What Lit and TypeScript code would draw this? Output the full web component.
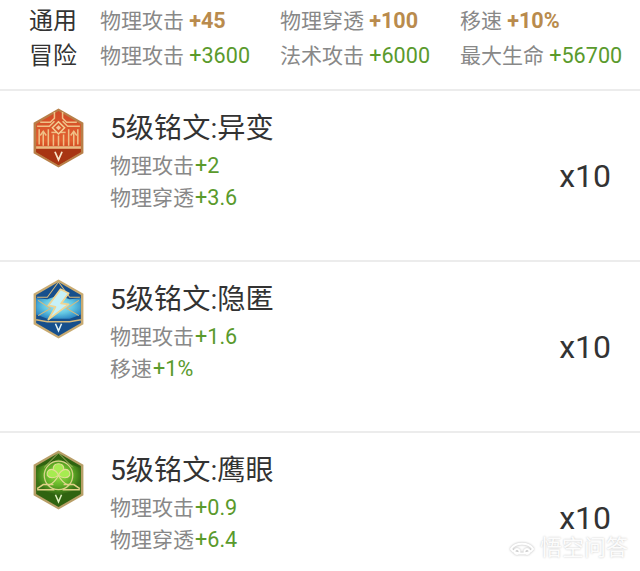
import { LitElement, html, css, svg } from "lit";
import { customElement } from "lit/decorators.js";

const hexOuter = "M25 .5 L49.5 14.5 V44.5 L25 58.5 L.5 44.5 V14.5 Z";
const hexInner = "M25 3 L47 15.8 V43.2 L25 56 L3 43.2 V15.8 Z";

const redIcon = svg`
  <defs><linearGradient id="r" x1="0" y1="0" x2="0" y2="1">
    <stop offset="0" stop-color="#d04a26"/><stop offset=".55" stop-color="#e2602f"/><stop offset=".72" stop-color="#c8421c"/><stop offset="1" stop-color="#a2300f"/>
  </linearGradient></defs>
  <path d=${hexOuter} fill="#b87f48"/>
  <path d=${hexInner} fill="url(#r)"/>
  <path d="M3 40 H47 V43.2 L25 56 L3 43.2 Z" fill="#a83512"/>
  <g fill="none" stroke="#efc086" stroke-width="1.5">
    <path d="M21 4 V10 L17 14 H7 M29 4 V10 L33 14 H43"/>
    <path d="M4 18 H16 L21 13 M46 18 H34 L29 13"/>
    <path d="M6 21 V36 M10 23 V37 M15 21 V37 M20 26 V37 M25 27 V37 M30 26 V37 M35 21 V37 M40 23 V37 M44 21 V36"/>
    <path d="M7 27 L10 23 L13 27 M37 27 L40 23 L43 27"/>
    <path d="M18 24 H32"/>
  </g>
  <path d="M3 37.5 H47 V40 H3 Z" fill="#e9bd84"/>
  <path d="M25 13.5 L31 19.5 L25 25.5 L19 19.5 Z" fill="#d85a2c" stroke="#f3cf94" stroke-width="1.5"/>
  <path d="M25 17 L27.5 19.5 L25 22 L22.5 19.5 Z" fill="#f7c69a"/>
  <path d="M21.5 43 L25 51 L28.5 43" fill="none" stroke="#f8e6c8" stroke-width="1.7"/>`;

const blueIcon = svg`
  <defs><radialGradient id="b" cx=".5" cy=".45" r=".6">
    <stop offset="0" stop-color="#b4eef5"/><stop offset=".55" stop-color="#63c7e2"/><stop offset="1" stop-color="#2c86c4"/>
  </radialGradient></defs>
  <path d=${hexOuter} fill="#c9ab72"/>
  <path d=${hexInner} fill="#164f8c"/>
  <path d="M3 19 L14 20 L25 16 L36 20 L47 19 V35 L36 39 L14 39 L3 35 Z" fill="url(#b)"/>
  <g fill="none" stroke="#d7ba7c" stroke-width="1">
    <path d="M25 3 L14 18 L4 18 M25 3 L36 18 L46 18"/>
    <path d="M3 40 L14 42 H36 L47 40" stroke-width="1.6"/>
    <path d="M5 21 L17 29 L5 36 M45 21 L33 29 L45 36"/>
  </g>
  <path d="M27 10 L15 26 L22 27.5 L15 40 L35 25 L27.5 24 L35 14 Z" fill="#c6f1f7" stroke="#efd592" stroke-width="1.7" stroke-linejoin="round"/>
  <path d="M22 44 L25 51 L28 44" fill="none" stroke="#e3f3f5" stroke-width="1.5"/>`;

const greenIcon = svg`
  <defs><radialGradient id="g" cx=".5" cy=".45" r=".5">
    <stop offset="0" stop-color="#9be648"/><stop offset=".6" stop-color="#62b027"/><stop offset="1" stop-color="#3a7315"/>
  </radialGradient></defs>
  <path d=${hexOuter} fill="#b89f68"/>
  <path d=${hexInner} fill="#2f6310"/>
  <path d="M3 18 L25 9 L47 18 V38 L25 44 L3 38 Z" fill="url(#g)"/>
  <path d="M25 3 L11 17 M25 3 L39 17" fill="none" stroke="#c7c57e" stroke-width=".8"/>
  <circle cx="25" cy="25" r="14" fill="none" stroke="#d8d28a" stroke-width="1.3"/>
  <g fill="#a6ec50" stroke="#e2dd94" stroke-width="1.1">
    <path d="M25 25 C21 23 18 19 21 15 C23 13 27 13 29 15 C32 19 29 23 25 25 Z"/>
    <path d="M25 25 C21 28 16 28 14 25 C13 22 15 19 18 19 C21 19 24 22 25 25 Z"/>
    <path d="M25 25 C29 28 34 28 36 25 C37 22 35 19 32 19 C29 19 26 22 25 25 Z"/>
    <path d="M25 25 C23 29 19 33 15 35 M25 25 C27 29 31 33 35 35" fill="none"/>
  </g>
  <path d="M4 38 L10 34 H20 M46 38 L40 34 H30 M4 39 H21 M29 39 H46" fill="none" stroke="#e0d186" stroke-width="1.5"/>
  <path d="M22 44 L25 51 L28 44" fill="none" stroke="#dff0c0" stroke-width="1.5"/>`;

interface Stat { name: string; value: string; }
interface Rune { title: string; icon: unknown; stats: Stat[]; }

const runes: Rune[] = [
  { title: "5级铭文:异变", icon: redIcon, stats: [{ name: "物理攻击", value: "+2" }, { name: "物理穿透", value: "+3.6" }] },
  { title: "5级铭文:隐匿", icon: blueIcon, stats: [{ name: "物理攻击", value: "+1.6" }, { name: "移速", value: "+1%" }] },
  { title: "5级铭文:鹰眼", icon: greenIcon, stats: [{ name: "物理攻击", value: "+0.9" }, { name: "物理穿透", value: "+6.4" }] },
];

const general: Stat[] = [
  { name: "物理攻击", value: "+45" }, { name: "物理穿透", value: "+100" }, { name: "移速", value: "+10%" },
];
const adventure: Stat[] = [
  { name: "物理攻击", value: "+3600" }, { name: "法术攻击", value: "+6000" }, { name: "最大生命", value: "+56700" },
];

@customElement("app-root")
export class AppRoot extends LitElement {
  static styles = css`
    :host {
      display: block;
      position: relative;
      width: 640px;
      height: 571px;
      overflow: hidden;
      background: #fff;
      font-family: Roboto, "Noto Sans CJK SC", sans-serif;
    }
    .summary {
      height: 91px;
      box-sizing: border-box;
      padding: 1px 0 0 29px;
      display: grid;
      grid-template-columns: 71px 180px 180px 1fr;
      grid-auto-rows: 35px;
      align-items: center;
      border-bottom: 2px solid #ececec;
    }
    .label { font-size: 24px; color: #333; }
    .cell { font-size: 21px; color: #888; white-space: nowrap; }
    .gold { color: #b98b4d; font-weight: 700; font-size: 21.6px; }
    .green { color: #5a9a2c; font-size: 21.6px; }
    .rune {
      height: 171px;
      box-sizing: border-box;
      padding: 17px 29px 0 33px;
      display: flex;
      align-items: flex-start;
      border-bottom: 2px solid #ececec;
    }
    .rune:last-of-type { border-bottom: none; }
    .icon { width: 51px; height: 60px; flex: none; filter: blur(.35px); }
    .info { flex: 1; margin-left: 26px; }
    .title { font-size: 28.2px; line-height: 42px; color: #333; white-space: nowrap; }
    .stat { font-size: 21px; line-height: 32px; color: #888; white-space: nowrap; }
    .stat .green { margin-left: 1px; }
    .count { font-size: 32px; color: #333; margin-top: 49px; }
    .mark {
      position: absolute;
      right: 12px;
      bottom: 10px;
      display: flex;
      align-items: center;
      gap: 6px;
      font-size: 22px;
      line-height: 26px;
      color: rgba(255,255,255,.95);
      text-shadow: 0 0 2px rgba(0,0,0,.25);
    }
    .mark svg { width: 24px; height: 16px; filter: drop-shadow(0 0 1px rgba(0,0,0,.3)); }
  `;

  private cell(s: Stat, cls: string) {
    return html`<div class="cell">${s.name} <span class=${cls}>${s.value}</span></div>`;
  }

  render() {
    return html`
      <div class="summary">
        <div class="label">通用</div>
        ${general.map((s) => this.cell(s, "gold"))}
        <div class="label">冒险</div>
        ${adventure.map((s) => this.cell(s, "green"))}
      </div>
      ${runes.map((r) => html`
        <div class="rune">
          <svg class="icon" viewBox="0 0 50 59">${r.icon}</svg>
          <div class="info">
            <div class="title">${r.title}</div>
            <div class="stats">
              ${r.stats.map((s) => html`<div class="stat">${s.name}<span class="green">${s.value}</span></div>`)}
            </div>
          </div>
          <div class="count">x10</div>
        </div>`)}
      <div class="mark">
        <svg viewBox="0 0 24 16"><path d="M1 9 C5 2 19 2 23 9 C19 15 5 15 1 9 Z M7 9 a2.5 2.5 0 1 0 .01 0 M17 9 a2.5 2.5 0 1 0 .01 0" fill="none" stroke="#fff" stroke-width="2"/></svg>
        <span>悟空问答</span>
      </div>
    `;
  }
}
